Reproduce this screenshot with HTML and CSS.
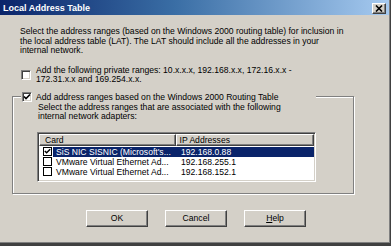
FILE: index.html
```html
<!DOCTYPE html>
<html>
<head>
<meta charset="utf-8">
<title>Local Address Table</title>
<link rel="stylesheet" href="styles.css">
</head>
<body>
<div class="window">
  <div class="titlebar">
    <span class="title">Local Address Table</span>
    <span class="close"><svg width="8" height="7" viewBox="0 0 8 7"><path d="M1 0.5 L7 6.5 M7 0.5 L1 6.5" stroke="#000" stroke-width="1.6"/></svg></span>
  </div>
  <div class="content">
    <p class="intro">Select the address ranges (based on the Windows 2000 routing table) for inclusion in<br>the local address table (LAT). The LAT should include all the addresses in your<br>internal network.</p>
    <div class="check-row">
      <span class="cb"></span>
      <span class="check-text">Add the following private ranges: 10.x.x.x, 192.168.x.x, 172.16.x.x - 172.31.x.x and 169.254.x.x.</span>
    </div>
    <fieldset class="group">
      <legend class="group-legend">
        <span class="cb"><svg width="8" height="8" viewBox="0 0 8 8"><path d="M1 3.5 L3 5.5 L7 1.5" fill="none" stroke="#000" stroke-width="1.6"/></svg></span>
        <span class="legend-text">Add address ranges based on the Windows 2000 Routing Table</span>
      </legend>
      <p class="group-text">Select the address ranges that are associated with the following internal network adapters:</p>
      <div class="listview">
        <div class="lv-header">
          <div class="lv-col col-card">Card</div>
          <div class="lv-col col-ip">IP Addresses</div>
        </div>
        <div class="lv-row selected">
          <span class="lv-cb"><svg width="7" height="7" viewBox="0 0 7 7"><path d="M0.8 3 L2.6 4.8 L6.2 1.2" fill="none" stroke="#000" stroke-width="1.5"/></svg></span>
          <span class="lv-cell card">SiS NIC SISNIC (Microsoft's...</span>
          <span class="lv-cell ip">192.168.0.88</span>
        </div>
        <div class="lv-row">
          <span class="lv-cb"></span>
          <span class="lv-cell card">VMware Virtual Ethernet Ad...</span>
          <span class="lv-cell ip">192.168.255.1</span>
        </div>
        <div class="lv-row">
          <span class="lv-cb"></span>
          <span class="lv-cell card">VMware Virtual Ethernet Ad...</span>
          <span class="lv-cell ip">192.168.152.1</span>
        </div>
      </div>
    </fieldset>
    <div class="buttons">
      <button class="btn">OK</button>
      <button class="btn">Cancel</button>
      <button class="btn"><u>H</u>elp</button>
    </div>
  </div>
</div>
</body>
</html>
```

FILE: styles.css
```css
* { box-sizing: border-box; }

html, body {
  margin: 0;
  padding: 0;
  background: #d4d0c8;
}

.window {
  width: 391px;
  height: 246px;
  background: #d4d0c8;
  border-right: 1px solid #404040;
  border-bottom: 3px solid #404040;
  box-shadow: inset -1px -1px 0 #808080;
  font-family: "Liberation Sans", Arial, sans-serif;
  font-size: 8.6px;
  color: #000;
  display: flex;
  flex-direction: column;
}

.titlebar {
  height: 15px;
  background: linear-gradient(to right, #0a246a 0%, #3a6ea5 45%, #a6caf0 100%);
  display: flex;
  align-items: center;
  justify-content: space-between;
  padding: 0 3px 0 3px;
  margin-right: 1px;
}

.title {
  color: #fff;
  font-weight: bold;
  font-size: 9px;
}

.close {
  width: 14px;
  height: 11px;
  background: #d4d0c8;
  border: 1px solid;
  border-color: #fff #404040 #404040 #fff;
  box-shadow: inset -1px -1px 0 #808080;
  display: flex;
  align-items: center;
  justify-content: center;
  margin-top: 1px;
}

.content {
  padding: 0 0 0 12px;
  display: flex;
  flex-direction: column;
}

.intro {
  margin: 12px 0 0 8px;
  width: 350px;
  line-height: 9.5px;
}

.check-row {
  margin: 10px 0 0 9px;
  display: flex;
  align-items: center;
  gap: 5px;
}

.check-text {
  width: 290px;
  line-height: 9px;
}

.cb {
  width: 10px;
  height: 10px;
  flex: none;
  background: #fff;
  border: 1px solid;
  border-color: #808080 #fff #fff #808080;
  box-shadow: inset 1px 1px 0 #404040, inset -1px -1px 0 #d4d0c8;
  display: flex;
  align-items: center;
  justify-content: center;
}

.group {
  margin: 8px 0 0 0;
  width: 342px;
  padding: 1px 0 11px 24px;
  border: 1px solid #808080;
  box-shadow: inset 1px 1px 0 #fff, 1px 1px 0 #fff;
  min-width: 0;
}

.group-legend {
  margin-left: -16px;
  padding: 0 0 0 1px;
  width: 295px;
  display: flex;
  align-items: center;
  gap: 4px;
  background: #d4d0c8;
}

.group-text {
  margin: 0 0 0 1px;
  width: 256px;
  line-height: 9.5px;
}

.listview {
  margin-top: 10px;
  width: 279px;
  height: 50px;
  background: #fff;
  border: 1px solid;
  border-color: #808080 #fff #fff #808080;
  box-shadow: inset 1px 1px 0 #404040, inset -1px -1px 0 #d4d0c8;
  padding: 1px;
}

.lv-header {
  display: flex;
  height: 12px;
  margin-bottom: 1px;
}

.lv-col {
  height: 12px;
  background: #d4d0c8;
  border: 1px solid;
  border-color: #fff #404040 #404040 #fff;
  box-shadow: inset -1px -1px 0 #808080;
  display: flex;
  align-items: center;
  padding-left: 5px;
}

.col-card { width: 137px; }
.col-ip { width: 139px; padding-left: 3px; }

.lv-row {
  display: flex;
  align-items: center;
  height: 10px;
}

.lv-cb {
  width: 9px;
  height: 9px;
  flex: none;
  margin: 0 1px 0 4px;
  background: #fff;
  border: 1px solid #000;
  display: flex;
  align-items: center;
  justify-content: center;
}

.lv-cell {
  height: 10px;
  display: flex;
  align-items: center;
  white-space: nowrap;
}

.lv-cell.card {
  width: 123px;
  padding-left: 3px;
}

.lv-cell.ip {
  width: 138px;
  padding-left: 5px;
}

.lv-row.selected .lv-cell {
  background: #0a246a;
  color: #fff;
}

.buttons {
  margin: 16px 0 0 74px;
  display: flex;
  gap: 17px;
}

.btn {
  width: 62px;
  height: 17px;
  padding: 0;
  font-family: "Liberation Sans", Arial, sans-serif;
  font-size: 8.6px;
  color: #000;
  background: #d4d0c8;
  border: 1px solid;
  border-color: #fff #404040 #404040 #fff;
  box-shadow: inset -1px -1px 0 #808080;
}
```
